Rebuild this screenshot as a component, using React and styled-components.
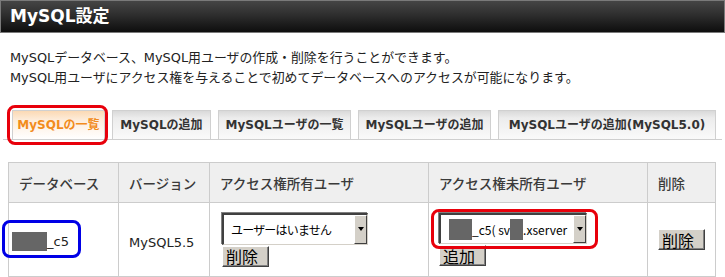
import React from "react"
import styled, { createGlobalStyle } from "styled-components"

const GlobalStyle = createGlobalStyle`
  body {
    margin: 0;
    background: #fff;
    font-family: "DejaVu Sans", "Noto Sans CJK JP", sans-serif;
    color: #333;
  }
`

const Page = styled.div`
  width: 725px;
  position: relative;
`

const TitleBar = styled.h1`
  margin: 0;
  height: 33px;
  box-sizing: border-box;
  border: 1px solid #7a7a7a;
  background: linear-gradient(#454545 0%, #2e2e2e 45%, #1c1c1c 75%, #0e0e0e 100%);
  color: #fff;
  font-size: 17px;
  font-weight: bold;
  line-height: 31px;
  padding-left: 9px;
`

const Intro = styled.p`
  margin: 15px 0 0;
  padding-left: 10px;
  font-size: 12.9px;
  line-height: 20px;
  color: #222;
`

const TabBar = styled.ul`
  list-style: none;
  margin: 22px 3px 0 3px;
  padding: 0 0 0 9px;
  display: flex;
  gap: 7px;
  border-bottom: 1px solid #cfcfcf;
  height: 29px;
`

const Tab = styled.li`
  box-sizing: border-box;
  height: 29px;
  width: ${(p) => p.$w}px;
  border: 1px solid #d0d0d0;
  border-bottom: none;
  text-align: center;
  font-size: 12px;
  font-weight: bold;
  line-height: 29px;
  color: ${(p) => (p.$active ? "#f28c1c" : "#333")};
  background: ${(p) =>
    p.$active
      ? "linear-gradient(#fbd9b4 0%, #fdeede 35%, #fff 100%)"
      : "linear-gradient(#d9d9d9 0%, #ececec 25%, #fafafa 100%)"};
  white-space: nowrap;
`

const Mark = styled.div`
  position: absolute;
  border: 3px solid ${(p) => p.$color};
  border-radius: 8px;
  left: ${(p) => p.$x}px;
  top: ${(p) => p.$y}px;
  width: ${(p) => p.$w}px;
  height: ${(p) => p.$h}px;
  box-sizing: border-box;
  pointer-events: none;
`

const Table = styled.table`
  margin: 22px 0 0 8px;
  width: 707px;
  border-collapse: collapse;
  table-layout: fixed;
  font-size: 13px;
`

const Th = styled.th`
  height: 40px;
  box-sizing: border-box;
  background: #efefef;
  border: 1px solid #cccccc;
  text-align: left;
  font-weight: 500;
  padding: 0 10px;
  color: #3a3a3a;
  font-family: "Noto Sans CJK JP", sans-serif;
  font-size: 13.5px;
`

const Td = styled.td`
  height: 74px;
  box-sizing: border-box;
  border: 1px solid #cccccc;
  padding: 0 ${(p) => p.$pad || 10}px;
  vertical-align: middle;
  color: #222;
`

const Redacted = styled.span`
  display: inline-block;
  width: ${(p) => p.$w}px;
  height: ${(p) => p.$h}px;
  background: #666;
  vertical-align: middle;
`

const DbName = styled.div`
  display: flex;
  align-items: center;
  font-size: 13px;
  padding-top: 4px;
`

const Version = styled.div`
  font-size: 13px;
  padding-top: 5px;
`

const Control = styled.div`
  display: flex;
  flex-direction: column;
  align-items: flex-start;
  gap: 1px;
`

const Select = styled.div`
  box-sizing: border-box;
  width: ${(p) => p.$w}px;
  height: ${(p) => p.$h}px;
  display: flex;
  background: #fff;
  border-top: 2px solid #404040;
  border-left: 2px solid #404040;
  border-right: 1px solid #d4d0c8;
  border-bottom: 1px solid #d4d0c8;
  box-shadow: inset -1px -1px 0 #fff, -1px -1px 0 #808080;
  overflow: hidden;
`

const SelectText = styled.span`
  flex: 1;
  display: flex;
  align-items: center;
  padding-left: ${(p) => p.$pl || 7}px;
  font-family: "Noto Sans CJK JP", sans-serif;
  font-size: 12px;
  letter-spacing: ${(p) => p.$ls || 0}px;
  color: #000;
  white-space: nowrap;
  overflow: hidden;
`

const Arrow = styled.span`
  width: 13px;
  flex-shrink: 0;
  box-sizing: border-box;
  background: #d4d0c8;
  border-top: 1px solid #fff;
  border-left: 1px solid #fff;
  border-right: 1px solid #404040;
  border-bottom: 1px solid #404040;
  display: flex;
  align-items: center;
  justify-content: center;
  &::after {
    content: "";
    border-left: 3.5px solid transparent;
    border-right: 3.5px solid transparent;
    border-top: 4px solid #000;
  }
`

const Button = styled.button`
  box-sizing: border-box;
  width: 47px;
  height: 21px;
  padding: 0 0 0 3px;
  background: #d4d0c8;
  border-top: 1px solid #fff;
  border-left: 1px solid #fff;
  border-right: 1px solid #404040;
  border-bottom: 1px solid #404040;
  box-shadow: inset -1px -1px 0 #808080;
  font-family: "Noto Sans CJK JP", sans-serif;
  font-size: 16px;
  line-height: 18px;
  color: #000;
  text-align: left;
`

const tabs = [
  { label: "MySQLの一覧", w: 93, active: true },
  { label: "MySQLの追加", w: 99 },
  { label: "MySQLユーザの一覧", w: 133 },
  { label: "MySQLユーザの追加", w: 133 },
  { label: "MySQLユーザの追加(MySQL5.0)", w: 218 },
]

export default function App() {
  return (
    <Page>
      <GlobalStyle />
      <TitleBar>MySQL設定</TitleBar>
      <Intro>
        MySQLデータベース、MySQL用ユーザの作成・削除を行うことができます。
        <br />
        MySQL用ユーザにアクセス権を与えることで初めてデータベースへのアクセスが可能になります。
      </Intro>
      <TabBar>
        {tabs.map((t) => (
          <Tab key={t.label} $w={t.w} $active={t.active}>
            {t.label}
          </Tab>
        ))}
      </TabBar>
      <Table>
        <colgroup>
          <col style={{ width: 110 }} />
          <col style={{ width: 91 }} />
          <col style={{ width: 219 }} />
          <col style={{ width: 219 }} />
          <col style={{ width: 68 }} />
        </colgroup>
        <thead>
          <tr>
            <Th>データベース</Th>
            <Th>バージョン</Th>
            <Th>アクセス権所有ユーザ</Th>
            <Th>アクセス権未所有ユーザ</Th>
            <Th>削除</Th>
          </tr>
        </thead>
        <tbody>
          <tr>
            <Td $pad={3}>
              <DbName>
                <Redacted $w={35} $h={19} />
                _c5
              </DbName>
            </Td>
            <Td>
              <Version>MySQL5.5</Version>
            </Td>
            <Td $pad={12}>
              <Control>
                <Select $w={146} $h={32}>
                  <SelectText $ls={-0.8}>ユーザーはいません</SelectText>
                  <Arrow />
                </Select>
                <Button>削除</Button>
              </Control>
            </Td>
            <Td>
              <Control>
                <Select $w={148} $h={31}>
                  <SelectText $pl={8}>
                    <Redacted $w={23} $h={21} />
                    _c5( sv
                    <Redacted $w={13} $h={21} />
                    .xserver
                  </SelectText>
                  <Arrow />
                </Select>
                <Button>追加</Button>
              </Control>
            </Td>
            <Td>
              <Button>削除</Button>
            </Td>
          </tr>
        </tbody>
      </Table>
      <Mark $color="#e8000b" $x={7} $y={105} $w={101} $h={40} />
      <Mark $color="#0000e6" $x={2} $y={220} $w={79} $h={38} />
      <Mark $color="#e8000b" $x={431} $y={209} $w={167} $h={40} />
    </Page>
  )
}
